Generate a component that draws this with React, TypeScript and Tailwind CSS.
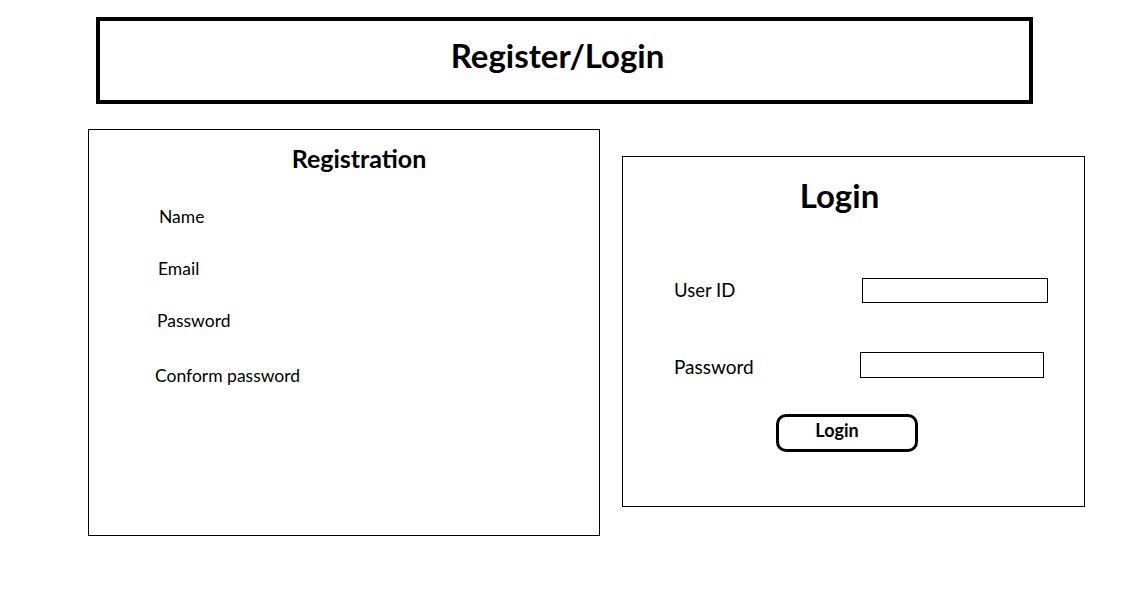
export default function App() {
  return (
    <div className="w-[1126px] h-[600px] bg-white overflow-hidden text-black font-['Lato','Open_Sans',sans-serif]">
      <header className="ml-[96px] mt-[17px] w-[937px] h-[87px] border-4 border-black flex items-center justify-center">
        <h1 className="text-[33px] font-bold leading-[40px] -mt-[12px] pr-[14px]">Register/Login</h1>
      </header>

      <div className="flex items-start">
        {/* Registration */}
        <section className="ml-[88px] mt-[25px] w-[512px] h-[407px] border border-black flex flex-col">
          <h2 className="mt-[14px] text-center text-[25px] font-bold leading-[28px] pl-[30px]">Registration</h2>
          <p className="mt-[35px] ml-[70px] text-[17.5px] leading-[20px]">Name</p>
          <p className="mt-[32px] ml-[69px] text-[17.5px] leading-[20px]">Email</p>
          <p className="mt-[32px] ml-[68px] text-[17.5px] leading-[20px]">Password</p>
          <p className="mt-[35px] ml-[66px] text-[17.5px] leading-[20px]">Conform password</p>
        </section>

        {/* Login */}
        <section className="ml-[22px] mt-[52px] w-[463px] h-[351px] border border-black flex flex-col">
          <h2 className="mt-[18px] text-center text-[33px] font-bold leading-[40px] pr-[28px]">Login</h2>
          <div className="mt-[63px] ml-[51px] flex items-center">
            <label className="w-[188px] text-[18.5px] leading-[25px]">User ID</label>
            <input className="w-[186px] h-[25px] border border-black outline-none" />
          </div>
          <div className="mt-[49px] ml-[51px] flex items-start">
            <label className="w-[186px] mt-[2px] text-[19px] leading-[26px]">Password</label>
            <input className="w-[184px] h-[26px] border border-black outline-none" />
          </div>
          <button
            type="button"
            className="mt-[34px] ml-[153px] w-[142px] h-[38px] border-[3px] border-black rounded-[10px] flex justify-center pr-[20px] pt-[1px] text-[18px] font-bold leading-[24px]"
          >
            Login
          </button>
        </section>
      </div>
    </div>
  );
}
